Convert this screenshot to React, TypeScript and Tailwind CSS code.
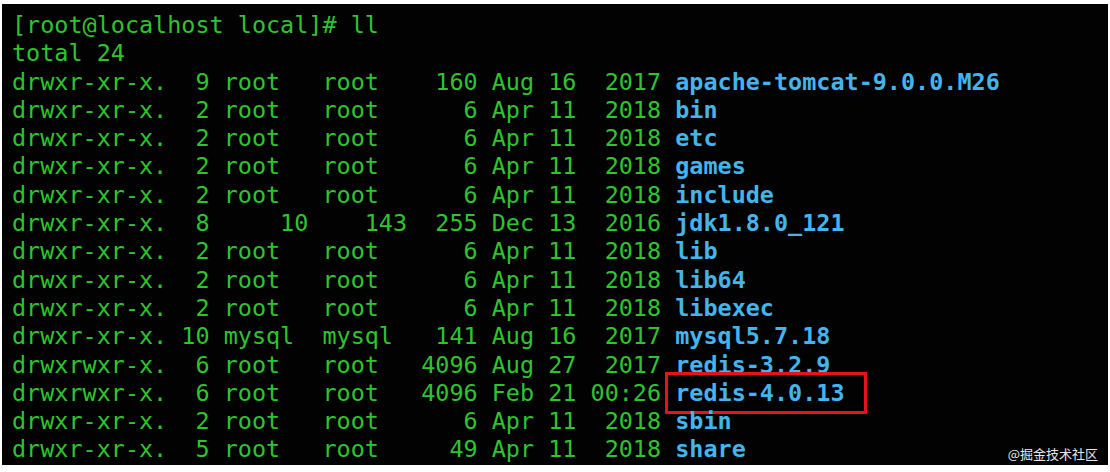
const pad = (s: string, n: number, right = false) =>
  right ? s.padStart(n, " ") : s.padEnd(n, " ");

type Entry = {
  perm: string;
  links: string;
  user: string;
  group: string;
  size: string;
  month: string;
  day: string;
  time: string;
  name: string;
  boxed?: boolean;
};

const entries: Entry[] = [
  { perm: "drwxr-xr-x.", links: "9", user: "root", group: "root", size: "160", month: "Aug", day: "16", time: "2017", name: "apache-tomcat-9.0.0.M26" },
  { perm: "drwxr-xr-x.", links: "2", user: "root", group: "root", size: "6", month: "Apr", day: "11", time: "2018", name: "bin" },
  { perm: "drwxr-xr-x.", links: "2", user: "root", group: "root", size: "6", month: "Apr", day: "11", time: "2018", name: "etc" },
  { perm: "drwxr-xr-x.", links: "2", user: "root", group: "root", size: "6", month: "Apr", day: "11", time: "2018", name: "games" },
  { perm: "drwxr-xr-x.", links: "2", user: "root", group: "root", size: "6", month: "Apr", day: "11", time: "2018", name: "include" },
  { perm: "drwxr-xr-x.", links: "8", user: "10", group: "143", size: "255", month: "Dec", day: "13", time: "2016", name: "jdk1.8.0_121" },
  { perm: "drwxr-xr-x.", links: "2", user: "root", group: "root", size: "6", month: "Apr", day: "11", time: "2018", name: "lib" },
  { perm: "drwxr-xr-x.", links: "2", user: "root", group: "root", size: "6", month: "Apr", day: "11", time: "2018", name: "lib64" },
  { perm: "drwxr-xr-x.", links: "2", user: "root", group: "root", size: "6", month: "Apr", day: "11", time: "2018", name: "libexec" },
  { perm: "drwxr-xr-x.", links: "10", user: "mysql", group: "mysql", size: "141", month: "Aug", day: "16", time: "2017", name: "mysql5.7.18" },
  { perm: "drwxrwxr-x.", links: "6", user: "root", group: "root", size: "4096", month: "Aug", day: "27", time: "2017", name: "redis-3.2.9" },
  { perm: "drwxrwxr-x.", links: "6", user: "root", group: "root", size: "4096", month: "Feb", day: "21", time: "00:26", name: "redis-4.0.13", boxed: true },
  { perm: "drwxr-xr-x.", links: "2", user: "root", group: "root", size: "6", month: "Apr", day: "11", time: "2018", name: "sbin" },
  { perm: "drwxr-xr-x.", links: "5", user: "root", group: "root", size: "49", month: "Apr", day: "11", time: "2018", name: "share" },
];

function line(e: Entry) {
  const num = (s: string) => /^\d+$/.test(s);
  return [
    e.perm,
    pad(e.links, 2, true),
    pad(e.user, 6, num(e.user)),
    pad(e.group, 6, num(e.group)),
    pad(e.size, 4, true),
    e.month,
    pad(e.day, 2, true),
    pad(e.time, 5, true),
  ].join(" ") + " ";
}

export default function App() {
  return (
    <div className="h-[472px] w-[1110px] bg-white pt-[4px] pl-[2px]">
      <div
        className="relative h-[461px] w-[1106px] overflow-hidden bg-[#020202] pt-[7px] pl-[10px] text-[23.45px] leading-[28.3px] text-[#2fc42f] whitespace-pre"
        style={{ fontFamily: '"DejaVu Sans Mono", monospace' }}
      >
        {/* prompt */}
        <div>[root@localhost local]# ll</div>
        <div>total 24</div>

        {/* listing */}
        {entries.map((e) => (
          <div key={e.name}>
            {line(e)}
            <span className="relative font-bold text-[#45b4ec]">
              {e.name}
              {e.boxed && (
                <span className="absolute -top-[7px] -left-[10px] -right-[22px] -bottom-[7px] border-[3px] border-[#e4141a]" />
              )}
            </span>
          </div>
        ))}

        {/* watermark */}
        <div
          className="absolute right-[10px] bottom-[3px] text-[13px] leading-[16px] text-[#e8e8e8]"
          style={{ fontFamily: '"Noto Sans CJK SC", sans-serif' }}
        >
          @掘金技术社区
        </div>
      </div>
    </div>
  );
}
